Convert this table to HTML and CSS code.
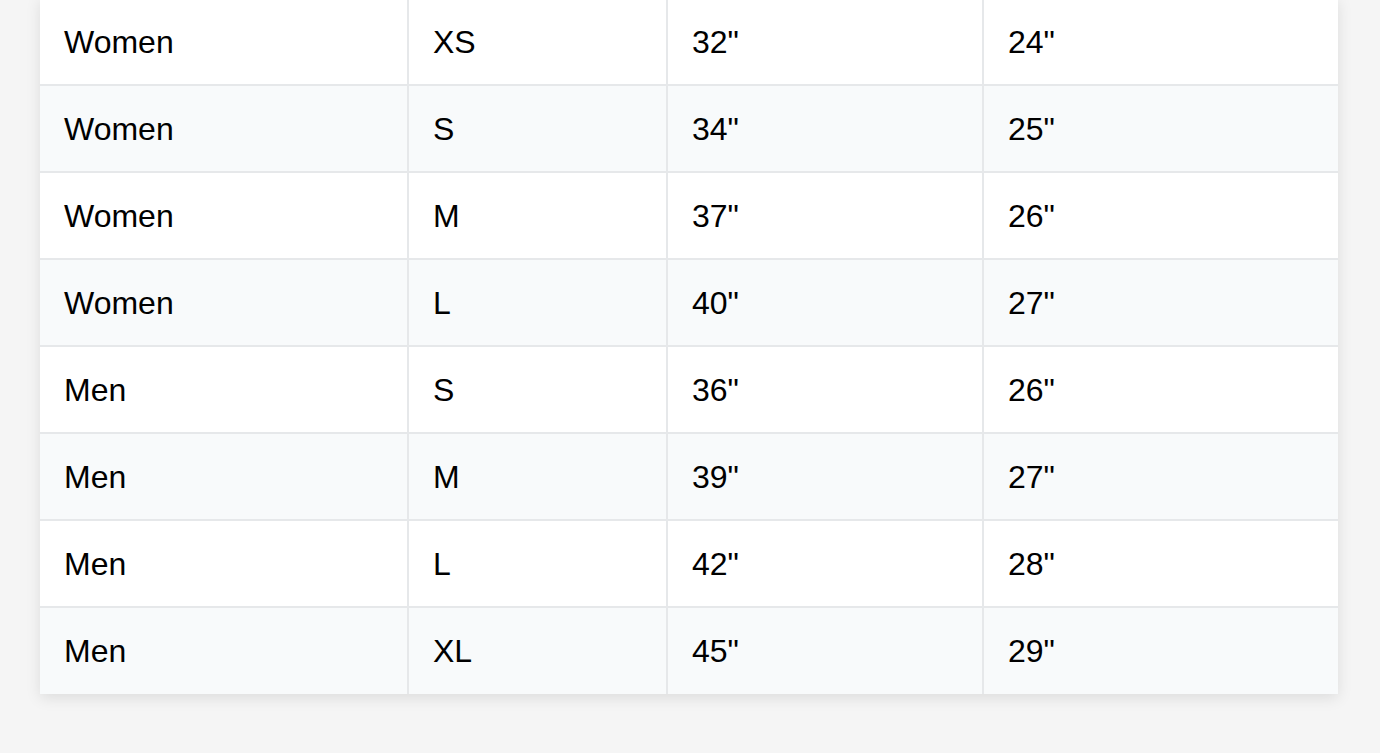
FILE: index.html
```html
<!DOCTYPE html>
<html>
<head>
<meta charset="utf-8">
<link rel="stylesheet" href="styles.css">
</head>
<body>
<div class="page">
  <table class="sizes">
    <colgroup>
      <col class="c1"><col class="c2"><col class="c3"><col class="c4">
    </colgroup>
    <tbody>
      <tr><td>Women</td><td>XS</td><td>32"</td><td>24"</td></tr>
      <tr><td>Women</td><td>S</td><td>34"</td><td>25"</td></tr>
      <tr><td>Women</td><td>M</td><td>37"</td><td>26"</td></tr>
      <tr><td>Women</td><td>L</td><td>40"</td><td>27"</td></tr>
      <tr><td>Men</td><td>S</td><td>36"</td><td>26"</td></tr>
      <tr><td>Men</td><td>M</td><td>39"</td><td>27"</td></tr>
      <tr><td>Men</td><td>L</td><td>42"</td><td>28"</td></tr>
      <tr><td>Men</td><td>XL</td><td>45"</td><td>29"</td></tr>
    </tbody>
  </table>
</div>
</body>
</html>
```
FILE: styles.css
```css
html, body {
  margin: 0;
  padding: 0;
  background: #f5f5f5;
  height: 100%;
  overflow: hidden;
}
.page {
  padding: 0 42px 0 40px;
  margin-top: -3px;
}
.sizes {
  width: 1298px;
  border-collapse: collapse;
  table-layout: fixed;
  background: #fff;
  box-shadow: 0 4px 14px rgba(0,0,0,0.1);
  font-family: "Liberation Sans", Arial, Helvetica, sans-serif;
  font-size: 32px;
  color: #000;
}
.c1 { width: 368px; }
.c2 { width: 259px; }
.c3 { width: 316px; }
.c4 { width: 355px; }
.sizes td {
  border: 2px solid #e6e8ea;
  height: 87px;
  padding: 0 24px;
  box-sizing: border-box;
  vertical-align: middle;
  line-height: 1;
}
.sizes tr:nth-child(even) td {
  background: #f8fafb;
}
.sizes tr td:first-child { border-left: none; }
.sizes tr td:last-child { border-right: none; }
.sizes tr:last-child td { border-bottom: none; }
```
